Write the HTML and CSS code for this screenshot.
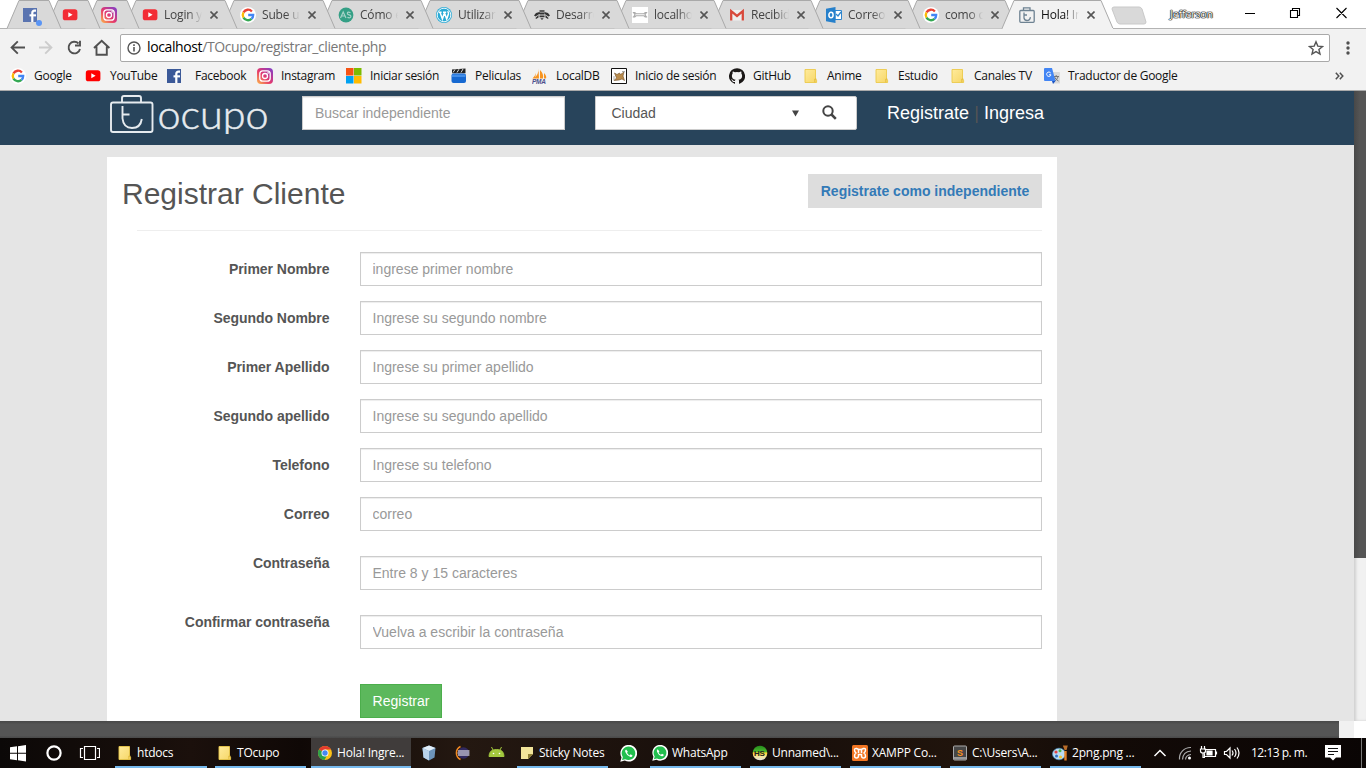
FILE: index.html
```html
<!DOCTYPE html>
<html lang="es">
<head>
<meta charset="utf-8">
<title>Hola! Ingresa</title>
<link rel="stylesheet" href="styles.css">
</head>
<body>
<svg class="defs" width="0" height="0">
  <defs>
    <linearGradient id="ig" x1="0" y1="1" x2="1" y2="0"><stop offset="0" stop-color="#fdb94b"/><stop offset=".45" stop-color="#e5386d"/><stop offset="1" stop-color="#7a3fd0"/></linearGradient>
    <linearGradient id="hs" x1="0" y1="0" x2="0" y2="1"><stop offset="0" stop-color="#238a1c"/><stop offset=".4" stop-color="#4bb82e"/><stop offset=".5" stop-color="#ffd42a"/><stop offset=".75" stop-color="#f6e6a0"/><stop offset="1" stop-color="#ddd"/></linearGradient>
    <linearGradient id="fold" x1="0" y1="0" x2="1" y2="1"><stop offset="0" stop-color="#ffeb9c"/><stop offset="1" stop-color="#f6d666"/></linearGradient>
  </defs>
  <symbol id="google" viewBox="0 0 16 16"><circle cx="8" cy="8" r="8" fill="#fff"/><g fill="none" stroke-width="2.300"><path d="M11.900 4.400A5.200 5.200 0 0 0 3.500 5.400" stroke="#ea4335"/><path d="M3.500 5.400a5.200 5.200 0 0 0 0 5.200" stroke="#fbbc05"/><path d="M3.500 10.600a5.200 5.200 0 0 0 8 1.300" stroke="#34a853"/><path d="M11.500 11.900A5.200 5.200 0 0 0 13.200 8H8.200" stroke="#4285f4"/></g></symbol>
  <symbol id="youtube" viewBox="0 0 16 16"><rect x=".8" y="2.300" width="14.600" height="11" rx="2.600" fill="currentColor"/><path d="M6.300 5.300v5L10.600 7.800z" fill="#fff"/></symbol>
  <symbol id="facebook" viewBox="0 0 16 16"><path fill="currentColor" d="M1 1h14v14H1z"/><path d="M10.300 15V6q0-2.400 2.300-2.400H14" fill="none" stroke="#fff" stroke-width="2.200"/><path d="M7.500 7.300H14v2.100H7.500z" fill="#fff"/></symbol>
  <symbol id="instagram" viewBox="0 0 16 16"><rect width="16" height="16" rx="4" fill="url(#ig)"/><rect x="2.800" y="2.800" width="10.400" height="10.400" rx="3" fill="none" stroke="#fff" stroke-width="1.300"/><circle cx="8" cy="8" r="2.500" fill="none" stroke="#fff" stroke-width="1.300"/><circle cx="11.100" cy="4.900" r=".8" fill="#fff"/></symbol>
  <symbol id="androidstudio" viewBox="0 0 16 16"><circle cx="8" cy="8" r="7.400" fill="#349f85"/><path d="M2.500 11 5.200 5 8 11M3.600 9h3.300M12.500 5.800q-3-1.500-3.200.5 0 1.300 1.800 1.500 2 .4 1.800 1.800-.4 1.900-3.500.8" fill="none" stroke="#a5d2c7" stroke-width="1.200"/></symbol>
  <symbol id="wordpress" viewBox="0 0 16 16"><circle cx="8" cy="8" r="8" fill="#2aaad5"/><circle cx="8" cy="8" r="6.800" fill="none" stroke="#fff" stroke-width=".9"/><path d="M2.600 5.200h3M4 5.300 6.400 12l1.800-5.600M7 5.200h3.200M8.300 5.300l2.400 6.700 1.700-5q.4-1.600-.8-2.800" fill="none" stroke="#fff" stroke-width="1.500"/></symbol>
  <symbol id="bee" viewBox="0 0 16 16"><g fill="#333"><path d="M0 8.500 2 6l3.500-1 .5 1.500L1.500 9.500zM16 8.500 14 6l-3.500-1-.5 1.500 4.500 3zM5.500 3.300h5v1.400h-5zM5.500 5.500h5v2h-5zM5.500 8.500h5v1.800h-5zM6.300 11.200h3.400L8 13zM1.500 11l3-3v2.500L2 12zM14.500 11l-3-3v2.500L14 12z"/></g></symbol>
  <symbol id="local" viewBox="0 0 16 16"><path fill="#fff" d="M0 0h16v16H0z"/><path d="M.8 5.500h2L4 6.700h8l1.200-1.200h2M.8 10h2L4 8.800h8l1.200 1.200h2M1.500 5.500 3 7.700 1.500 10M14.500 5.500 13 7.700l1.500 2.300" fill="none" stroke="#aaa" stroke-width="1.100"/></symbol>
  <symbol id="gmail" viewBox="0 0 16 16"><path d="M1 3h14v10.500H1z" fill="#eee"/><path d="M2.200 13.500V4.200L8 9l5.800-4.800v9.300" fill="none" stroke="#d8493b" stroke-width="2.300"/></symbol>
  <symbol id="outlook" viewBox="0 0 16 16"><path d="M9 3.500h6.500v9H9z" fill="#fff" stroke="#2f86ce"/><path d="m10 7 2 2 3-4" fill="none" stroke="#2f86ce" stroke-width="1.300"/><path d="M0 1.800 9.500 0v16L0 14.200z" fill="#2680cb"/><ellipse cx="5" cy="8" rx="2.100" ry="2.700" fill="none" stroke="#fff" stroke-width="1.500"/></symbol>
  <symbol id="case" viewBox="0 0 16 16"><g fill="none" stroke="#6e8292" stroke-width="1.300"><rect x=".8" y="3.500" width="14.400" height="11.800" rx="1"/><path d="M4.500 3.500V.8H11v2.700M5 5.500V11q.5 2.500 3 2.500 3 0 3.400-3.400M5 8h3"/></g></symbol>
  <symbol id="folder" viewBox="0 0 16 16"><path d="M2 1.500h10.500v10H13q.6 0 .6.700v2.300H2z" fill="url(#fold)" stroke="#ecc94b" stroke-width=".9"/><path d="M11.800 14.300V11h1.600" fill="none" stroke="#dfb636" stroke-width=".8"/></symbol>
  <symbol id="whatsapp" viewBox="0 0 16 16"><path d="M.3 15.800 1.400 11.700A7.900 7.900 0 1 1 4.500 14.700z" fill="#fff"/><path d="m1.900 14.200.8-2.800A6.400 6.400 0 1 1 4.900 13.400z" fill="#22bf4e"/><path d="M5.700 4.300q-1.300.7-.7 2.400 1.200 3.400 4.800 4.600 1.700.2 2-1.500l-1.800-1-1 1q-1.700-.8-2.400-2.400l.8-1z" fill="#fff"/></symbol>
</svg>

<header class="browser">
  <div class="strip">
    <div class="tabs" id="tabs"></div>
    <div class="window">
      <svg class="newtab" viewBox="0 0 36 20"><path d="M3 1h25q2 0 3 2l4 13q0 2-2 2H9q-2 0-3-2L1 3q0-2 2-2z" fill="#d9d9d9" stroke="#c9c9c9"/></svg>
      <span class="user">Jefferson</span>
      <svg class="controls" viewBox="0 0 104 14"><path d="M0 7.500h10M45.500 4.500h7v7h-7zM47.500 4.500v-2h7v7h-2M91.500 2l10 10M101.500 2l-10 10" fill="none" stroke="#000" stroke-width="1.100"/></svg>
    </div>
  </div>
  <div class="toolbar">
    <svg class="nav" viewBox="0 0 104 20"><g fill="none" stroke="#505050" stroke-width="1.900"><path d="M16 9.500H3M8.800 3.300 2.600 9.500l6.200 6.200"/><path d="M30 9.500h12M36.200 3.300l6.200 6.200-6.200 6.200" stroke="#ccc"/><path d="M69.500 5.500A5.800 5.800 0 1 0 71 11M71 2.800V7.500h-5"/><path d="M85 10 92.700 2.800l7.700 7.200M87.500 8.500v8.200h10.300V8.500"/></g></svg>
    <div class="omnibox">
      <svg class="info" viewBox="0 0 14 14"><circle cx="7" cy="7" r="6" fill="none" stroke="#555" stroke-width="1.400"/><path d="M7 3.200v1.700M7 6v4.600" stroke="#555" stroke-width="1.600"/></svg>
      <span class="url"><b>localhost</b>/TOcupo/registrar_cliente.php</span>
      <svg class="star" viewBox="0 0 16 16"><path d="m8 1.800 1.800 4.300 4.700.4-3.600 3 1.100 4.600L8 11.600l-4 2.500 1.100-4.600-3.600-3 4.700-.4z" fill="none" stroke="#555" stroke-width="1.400"/></svg>
    </div>
    <svg class="dots" viewBox="0 0 4 14"><g fill="#505050"><circle cx="2" cy="2" r="1.700"/><circle cx="2" cy="7" r="1.700"/><circle cx="2" cy="12" r="1.700"/></g></svg>
  </div>
  <nav class="bookmarks">
    <a><svg class="ico"><use href="#google"/></svg>Google</a>
    <a class="tube"><svg class="ico yt"><use href="#youtube"/></svg>YouTube</a>
    <a class="wide"><svg class="ico fb"><use href="#facebook"/></svg>Facebook</a>
    <a><svg class="ico"><use href="#instagram"/></svg>Instagram</a>
    <a><svg class="ico" viewBox="0 0 16 16"><path fill="#f65314" d="M0 0h7.500v7.500H0z"/><path fill="#7cbb00" d="M8 0h7.500v7.500H8z"/><path fill="#00a1f1" d="M0 8h7.500v7.500H0z"/><path fill="#ffbb00" d="M8 8h7.500v7.500H8z"/></svg>Iniciar sesión</a>
    <a><svg class="ico" viewBox="0 0 16 16"><path d="M1 1.500 14.500.5v4.800H1z" fill="#222"/><path d="m4 1.500-2 3M8 1.200 6 4.500M12 1l-2 3.500" stroke="#ddd"/><rect x=".5" y="5.500" width="14.500" height="9.500" rx="2" fill="#1769d1"/><path d="M1 6.500h13.500V9H1z" fill="#438ee8"/></svg>Peliculas</a>
    <a><svg class="ico" viewBox="0 0 16 16"><path d="M6.500.5Q7 6 2 10.500h5zM8 2q4 4 3 8.500H8zM12 5q3 3 2 5.500h-2zM4 5Q3 8 .5 10.500H3z" fill="#f79420"/><text x="0" y="15.500" class="pma">PMA</text></svg>LocalDB</a>
    <a><svg class="ico" viewBox="0 0 16 16"><path d="M.5.500h15v15H.5z" fill="#fff" stroke="#111"/><path d="M3 12.500 5.500 10 3.500 5 6 6.500 8.500 5l1 1.500L13 4l-1 4 1.500 4.500L11 11l-3 1z" fill="#b98b4b" stroke="#71502d" stroke-width=".6"/><path d="M2 9h2M2 11h2M11 3.500h3" stroke="#888" stroke-width=".7"/></svg>Inicio de sesión</a>
    <a><svg class="ico" viewBox="0 0 16 16"><path d="M8 .2a8 8 0 0 0-2.500 15.600c.4 0 .5-.2.500-.4v-1.500c-2.200.5-2.700-1-2.700-1-.4-.9-.9-1.200-.9-1.200-.7-.5.100-.5.100-.5.800.1 1.200.8 1.200.8.700 1.300 1.900.9 2.300.7.100-.5.300-.9.500-1.100-1.800-.2-3.600-.9-3.600-3.900 0-.9.300-1.600.8-2.200-.1-.2-.3-1 .1-2.100 0 0 .7-.2 2.200.8a7.600 7.600 0 0 1 4 0c1.500-1 2.200-.8 2.200-.8.400 1.100.2 1.900.1 2.100.5.600.8 1.300.8 2.200 0 3.100-1.900 3.700-3.600 3.900.3.300.5.800.5 1.500v2.300c0 .2.200.5.600.4A8 8 0 0 0 8 .2z" fill="#1b1817"/></svg>GitHub</a>
    <a><svg class="ico"><use href="#folder"/></svg>Anime</a>
    <a><svg class="ico"><use href="#folder"/></svg>Estudio</a>
    <a><svg class="ico"><use href="#folder"/></svg>Canales TV</a>
    <a><svg class="ico" viewBox="0 0 16 16"><path d="M6 4h9q1 0 1 1v10.500H9z" fill="#d9d9d9"/><path d="M9.500 8.500H15M12.200 7v1.500M14 9q-1 3-4 4.500M10.500 9q1 2.500 4 4" fill="none" stroke="#777"/><path d="M1 0h7l3.500 13H1q-1 0-1-1V1q0-1 1-1z" fill="#4285f4"/><path d="m8 13h3.500L9 16z" fill="#1a53c4"/><path d="M6.700 5A2.200 2.200 0 1 0 7 6.800H5" fill="none" stroke="#fff"/></svg>Traductor de Google</a>
    <svg class="more" viewBox="0 0 9 8"><path d="m.8.800 3 3.200-3 3.200M4.800.800l3 3.200-3 3.200" fill="none" stroke="#505050" stroke-width="1.500"/></svg>
  </nav>
</header>

<div class="viewport">
  <div class="page">
    <div class="topbar">
      <svg class="logo" viewBox="0 0 162 40"><g fill="none" stroke="#e6ebef" stroke-width="1.900"><rect x="3" y="8.500" width="41.500" height="29.500" rx="2"/><path d="M14 8.500V4q0-2 2-2h15q2 0 2 2v4.500M14.500 12v12.500q1 9.500 9.500 9.500 8.500 0 9.800-9M14.500 20.500h7"/></g><text x="49.500" y="35" textLength="111" lengthAdjust="spacingAndGlyphs">ocupo</text></svg>
      <input class="field search" placeholder="Buscar independiente">
      <div class="city"><span>Ciudad</span><svg class="arrow" viewBox="0 0 7 7"><path d="M0 .5h7L3.500 6.500z" fill="#444"/></svg><svg class="lens" viewBox="0 0 15 15"><circle cx="6" cy="6" r="4.700" fill="none" stroke="#444" stroke-width="2"/><path d="m9.500 9.500 4.300 4.300" stroke="#444" stroke-width="2.500"/></svg></div>
      <div class="account"><a>Registrate</a><span>|</span><a>Ingresa</a></div>
    </div>
    <main class="card">
      <div class="heading"><h2>Registrar Cliente</h2><a class="alt">Registrate como independiente</a></div>
      <hr>
      <form>
        <div class="row"><label>Primer Nombre</label><input class="field" placeholder="ingrese primer nombre"></div>
        <div class="row"><label>Segundo Nombre</label><input class="field" placeholder="Ingrese su segundo nombre"></div>
        <div class="row"><label>Primer Apellido</label><input class="field" placeholder="Ingrese su primer apellido"></div>
        <div class="row"><label>Segundo apellido</label><input class="field" placeholder="Ingrese su segundo apellido"></div>
        <div class="row"><label>Telefono</label><input class="field" placeholder="Ingrese su telefono"></div>
        <div class="row"><label>Correo</label><input class="field" placeholder="correo"></div>
        <div class="row low"><label>Contraseña</label><input class="field" placeholder="Entre 8 y 15 caracteres"></div>
        <div class="row low"><label>Confirmar contraseña</label><input class="field" placeholder="Vuelva a escribir la contraseña"></div>
        <button type="button" class="submit">Registrar</button>
      </form>
    </main>
  </div>
  <div class="vscroll"><div class="vthumb"></div></div>
</div>
<div class="hscroll"><div class="hthumb"></div><div class="htrack"></div></div>

<footer class="taskbar">
  <svg class="start" viewBox="0 0 100 20"><path d="m10 4.300 7-1v6.500h-7zM18 3.200 26 2v7.800h-8zM10 10.700h7v6.500l-7-1zM18 10.700h8v7.800l-8-1.200z" fill="#fff"/><circle cx="54" cy="10" r="6.600" fill="none" stroke="#fff" stroke-width="2.200"/><path d="M84.500 3.500h11v13h-11zM83 5.500h-2.500v9H83M97 5.500h2.500v9H97" fill="none" stroke="#fff" stroke-width="1.200"/></svg>
  <a class="task"><svg class="ico"><use href="#folder"/></svg>htdocs</a>
  <a class="task"><svg class="ico"><use href="#folder"/></svg>TOcupo</a>
  <a class="task active"><svg class="ico" viewBox="0 0 16 16"><circle cx="8" cy="8" r="7" fill="#fbc116"/><path d="M8 8 1.900 4.600A7 7 0 0 1 14.100 4.600H8z" fill="#e33b2e"/><path d="M8 8 1.900 4.600A7 7 0 0 0 7.500 15L10.500 9.500z" fill="#2ca14b"/><circle cx="8" cy="8" r="3.500" fill="#fff"/><circle cx="8" cy="8" r="2.700" fill="#4688f1"/></svg>Hola! Ingre...</a>
  <svg class="pinned" viewBox="0 0 84 18"><path d="m8 1.500 6.500 2.500-1 9.500L8 16.500l-5.500-3L1.500 4z" fill="#6c93ba"/><path d="m8 1.500 6.500 2.500L8 7 1.500 4z" fill="#e2effa"/><path d="M8 7 1.500 4l1 9.500 5.500 3z" fill="#b9d3ec"/><circle cx="42.500" cy="9" r="5.800" fill="#31295f"/><path d="M37 7h11.500M36.500 9h12M37 11h11.500" stroke="#fff" stroke-width="1.100"/><path d="M39.500 2.500A7.200 7.200 0 0 0 39.500 15.500" fill="none" stroke="#f28a23" stroke-width="1.500"/><path d="M68 12.500q0-7 7.500-7t7.500 7zM70.500 3 72 6M80.500 3 79 6" fill="#a3c83e" stroke="#a3c83e"/><circle cx="72.500" cy="9.500" r=".8" fill="#fff"/><circle cx="78.500" cy="9.500" r=".8" fill="#fff"/></svg>
  <a class="task"><svg class="ico" viewBox="0 0 16 16"><path d="M2 2h12v7l-5 5H2z" fill="#f2e49a"/><path d="M9 14V9h5z" fill="#8d7d34"/></svg>Sticky Notes</a>
  <svg class="ico wa"><use href="#whatsapp"/></svg>
  <a class="task near"><svg class="ico"><use href="#whatsapp"/></svg>WhatsApp</a>
  <a class="task near"><svg class="ico" viewBox="0 0 16 16"><circle cx="8" cy="8" r="7.300" fill="url(#hs)"/><text x="2" y="11" class="hs">HS</text></svg>Unnamed\...</a>
  <a class="task near"><svg class="ico" viewBox="0 0 16 16"><rect width="16" height="16" rx="1.500" fill="#f37623"/><path d="M4.500 3.500Q8 5.500 11.500 3.500q2-.5 2 1.500 0 1.800-1.500 3 1.500 1 1.500 3 0 2-2 2-1.800 0-2-2V9.500h-3V11q-.2 2-2 2t-2-2q0-2 1.500-3-1.500-1.200-1.500-3t2-1.500zM6.500 5v3M9.500 5v3" fill="none" stroke="#fff" stroke-width="1.500"/></svg>XAMPP Co...</a>
  <a class="task near"><svg class="ico" viewBox="0 0 16 16"><rect x="1.500" y="1" width="13" height="14" rx="1" fill="#474747" stroke="#aaa"/><path d="M2 12h12v2.500H2z" fill="#999"/><text x="5" y="10.500" class="subl">S</text></svg>C:\Users\A...</a>
  <a class="task near"><svg class="ico" viewBox="0 0 16 16"><ellipse cx="7" cy="9" rx="6.500" ry="5.800" fill="#b9dcf3" stroke="#4b95c9" stroke-width=".6"/><circle cx="4" cy="7" r="1.600" fill="#e04444"/><circle cx="8" cy="5.800" r="1.500" fill="#4fb443"/><circle cx="4.500" cy="11" r="1.500" fill="#3171c7"/><circle cx="8.500" cy="12" r="1.500" fill="#f2c530"/><path d="M13.500 6v9.500" stroke="#e28227" stroke-width="2.400"/><path d="M10.800.500h5L14.600 5h-2z" fill="#b86d29"/></svg>2png.png ...</a>
  <svg class="tray" viewBox="0 0 90 20"><g fill="none" stroke="#fff" stroke-width="1.200"><path d="m4.500 13 5.500-5.500 5.500 5.500" stroke-width="1.500"/><path d="M29.500 16.500A11 11 0 0 1 41 4.500M32.500 16.500q.5-8 8.500-8.500M35.500 16.500Q36 12 41 11.500" stroke="#aaa"/><path d="M54.500 6.500h11v7h-11v-3M66.500 8.500v3M51.500 3v3M54.500 3v3M50.500 6h5v2q0 2-2.500 2T50.500 8zM53 10v4.500h2"/><path d="M57 8h5v4h-5z" fill="#fff"/><path d="M74.500 8.500h2l3.500-3.500v10l-3.500-3.500h-2zM82 7.500q2 2.500 0 5M84.500 6q3 4 0 8M87 4.500q4 5.500 0 11"/></g><circle cx="39.500" cy="15" r="1.500" fill="#fff"/></svg>
  <span class="clock">12:13 p. m.</span>
  <svg class="note" viewBox="0 0 16 16"><path d="M0 0h16v12.500h-5L8 15.500l-3-3H0z" fill="#fff"/><path d="M3 3.500h10M3 6.500h10M3 9.500h6" stroke="#111"/></svg>
  <span class="edge"></span>
</footer>
<script src="tabs.js"></script>
</body>
</html>
```
FILE: styles.css
```css
* { box-sizing: border-box; }
body { margin: 0; width: 1366px; height: 768px; overflow: hidden; font-family: "Liberation Sans", Arial, sans-serif; font-size: 14px; line-height: 20px; color: #555; background: #fff; }
.defs { position: absolute; }
.ico { width: 16px; height: 16px; flex: none; }
.pma { font: italic bold 6.500px "Liberation Sans", sans-serif; fill: #4b4f8c; }
.hs { font: bold 8px "Liberation Sans", sans-serif; fill: #222; }
.subl { font: bold 9px "Liberation Sans", sans-serif; fill: #ff9421; }

.browser { height: 91px; background: #f2f2f2; border-bottom: 1px solid #aaa; font-family: "Open Sans", "Noto Sans", sans-serif; font-size: 12px; }
.strip { height: 29px; display: flex; background: #fff; border-bottom: 1px solid #b3b3b3; }
.tabs { display: flex; padding-left: 18px; width: 1111px; flex: none; }
.tab { position: relative; isolation: isolate; flex: none; height: 29px; display: flex; align-items: center; padding: 1px 0 0 7px; color: #444; letter-spacing: -.2px; }
.tab .shape { position: absolute; left: -11px; top: 0; height: 29px; overflow: visible; z-index: -1; }
.tab .ico { margin-right: 6px; }
.tab.pin { padding-left: 5px; }
.tab.pin:first-child .ico { margin-left: -1px; }
.tab .label { width: 40px; overflow: hidden; white-space: nowrap; -webkit-mask-image: linear-gradient(90deg, #000 60%, transparent 95%); mask-image: linear-gradient(90deg, #000 60%, transparent 95%); }
.tab.on { color: #111; padding-left: 6px; }
.tab .close { width: 8px; height: 8px; margin-left: 6px; }
.tab .dot { position: absolute; left: 18px; top: 20px; width: 6px; height: 6px; border-radius: 50%; background: #5a95f5; }
.yt { color: #f00; }
.fb { color: #3b5998; }
.window { flex: 1; display: flex; align-items: center; }
.newtab { width: 36px; height: 20px; margin: 3px 23px 0 0; }
.user { width: 75px; font-size: 10.500px; letter-spacing: -.1px; line-height: 20px; color: #fff; text-shadow: 0 0 1px #000, 0 0 1px #000, 0 0 1px #000, 0 0 1px #000; }
.controls { width: 104px; height: 14px; margin-top: -2px; }
.toolbar { height: 34px; display: flex; align-items: center; padding: 3px 16px 0 9px; }
.nav { width: 104px; height: 20px; margin-right: 7px; }
.omnibox { width: 1210px; height: 28px; display: flex; align-items: center; border: 1px solid #a9a9a9; border-radius: 2px; background: #fff; padding: 0 5px 0 6px; }
.info { width: 14px; height: 14px; margin-right: 6px; }
.url { font-size: 14px; line-height: 20px; margin-top: -1px; color: #777; letter-spacing: -.39px; flex: 1; }
.url b { font-weight: 400; color: #000; }
.star { width: 16px; height: 16px; }
.dots { width: 4px; height: 14px; margin-left: 16px; }
.bookmarks { height: 26px; padding-left: 10px; display: grid; align-items: center; grid-template-columns: 76px 81px 90px 89px 105px 81px 79px 118px 74px 71px 76px 94px 291px 9px; color: #111; letter-spacing: -.28px; }
.bookmarks a { display: flex; align-items: center; gap: 8px; white-space: nowrap; }
.bookmarks .wide { gap: 12px; }
.bookmarks .wide .ico, .bookmarks .tube .ico { margin-left: -1px; margin-right: 1px; }
.more { width: 9px; height: 8px; }

.viewport { height: 630px; display: flex; }
.page { width: 1354px; height: 630px; overflow: hidden; background: #e5e5e5; }
.topbar { height: 54px; display: flex; align-items: flex-start; background: #28445b; padding: 5px 0 0 108px; }
.logo { width: 162px; height: 40px; margin: -2px 32px 0 0; overflow: hidden; }
.logo text { font: 300 38.500px Lato, sans-serif; fill: #e6ebef; stroke: #e6ebef; stroke-width: .5px; }
.field { display: block; height: 34px; width: 682px; border: 1px solid #ccc; border-radius: 0; background: #fff; padding: 6px 12px 6px 11.500px; font: 14px/20px "Liberation Sans", Arial, sans-serif; color: #555; box-shadow: inset 0 1px 1px rgba(0,0,0,.075); }
.field::placeholder { color: #999; opacity: 1; }
.search { width: 263px; margin-right: 30px; padding-left: 12px; }
.city { width: 262px; height: 34px; display: flex; align-items: center; background: #fff; border: 1px solid #ccc; border-radius: 0 2px 2px 0; padding-left: 15.500px; }
.city span { width: 180px; }
.arrow { width: 7px; height: 7px; margin-right: 23px; }
.lens { width: 15px; height: 15px; margin-top: -2px; }
.account { display: flex; margin-left: 30px; padding-top: 7px; font-size: 18px; color: #fff; }
.account span { color: #555; width: 15px; text-align: center; font-size: 18px; }
.card { width: 950px; height: 564px; margin: 12px 0 0 107px; background: #fff; padding: 17px 15px 0; }
.heading { display: flex; justify-content: space-between; height: 56px; }
h2 { margin: 3px 0 0; font-size: 30px; line-height: 33px; font-weight: 400; color: #555; }
.alt { width: 234px; height: 34px; background: #ddd; color: #337ab7; font-weight: 700; line-height: 34px; text-align: center; }
hr { margin: 0 0 21px 15px; border: 0; border-top: 1px solid #eee; }
.row { display: grid; grid-template-columns: 207.500px 682px; column-gap: 30.500px; margin-bottom: 15px; }
.row label { font-weight: 700; text-align: right; padding-top: 7px; height: 34px; letter-spacing: -.04px; }
.row.low .field { margin-top: 10px; }
.submit { display: block; width: 82px; height: 34px; margin: 35px 0 0 238px; padding: 0; background: #5cb85c; border: 1px solid #4cae4c; color: #fff; font: 14px/20px "Liberation Sans", Arial, sans-serif; }
.vscroll { width: 12px; background: #f1f1f1; box-shadow: inset 2px 0 3px #d0d0d0; }
.vthumb { height: 467px; background: linear-gradient(90deg, #484848, #555 50%); }
.hscroll { height: 17px; display: flex; background: #fff; }
.hthumb { width: 1339px; background: linear-gradient(#484848, #555 20%, #555 85%, #484848); }
.htrack { width: 15px; background: #f1f1f1; }

.taskbar { height: 30px; display: grid; align-items: center; grid-template-columns: 115px 92px 8px 91px 5px 100px 10px 84px 12px 91px 12px 30px 91px 9px 91px 9px 91px 9px 91px 9px 91px 9px 90px 11px 74px 36px 1px; background: linear-gradient(90deg, #0b0807, #1b100c 14%, #0f0806 22%, #241811 34%, #160d0a 55%, #20140c 70%, #120a07 82%, #0a0504); color: #fff; font: 12px/20px "Open Sans", "Noto Sans", sans-serif; }
.start { grid-column: 1; width: 100px; height: 20px; }
.task { height: 30px; display: flex; align-items: center; gap: 4px; padding: 2px 0 0 2px; border-bottom: 2px solid #76b9ed; white-space: nowrap; letter-spacing: -.22px; }
.task:nth-of-type(1) { grid-column: 2; }
.task:nth-of-type(2) { grid-column: 4; }
.task:nth-of-type(3) { grid-column: 6; padding-left: 6px; }
.active { background: #403c3b; }
.pinned { grid-column: 8; width: 84px; height: 18px; }
.task:nth-of-type(4) { grid-column: 10; }
.wa { grid-column: 12; width: 17px; height: 17px; }
.task:nth-of-type(5) { grid-column: 13; }
.task:nth-of-type(6) { grid-column: 15; }
.task:nth-of-type(7) { grid-column: 17; }
.task:nth-of-type(8) { grid-column: 19; }
.task:nth-of-type(9) { grid-column: 21; }
.tray { grid-column: 23; width: 90px; height: 20px; }
.clock { grid-column: 25; letter-spacing: -.5px; }
.note { grid-column: 26; width: 16px; height: 16px; }
.edge { grid-column: 27; height: 30px; background: #777; }
```
FILE: tabs.js
```js
// Tab strip: icon, label, slot width
const tabs = [
  ["facebook", "", 39], ["youtube", "", 39], ["instagram", "", 39],
  ["youtube", "Login y", 98], ["google", "Sube un", 98], ["androidstudio", "Cómo e", 98],
  ["wordpress", "Utilizar", 98], ["bee", "Desarro", 98], ["local", "localho", 97],
  ["gmail", "Recibid", 97], ["outlook", "Correo", 97], ["google", "como c", 97],
  ["case", "Hola! In", 98]
];
const colors = { facebook: "#5a74b0", youtube: "#f22c35" };
document.getElementById("tabs").innerHTML = tabs.map(([icon, label, w], i) => {
  const on = i === tabs.length - 1;
  const r = w + (on ? 1 : 3);
  const d = `M0 28.500 12 .5H${r}L${r + 12} 28.500`;
  return `<div class="tab${label ? "" : " pin"}${on ? " on" : ""}" style="width:${w}px;z-index:${on ? 30 : 20 - i}">
    <svg class="shape" width="${w + 24}"><path d="${d}" fill="${on ? "#f2f2f2" : "#d9d9d9"}" stroke="#a9a9a9"/>${on ? `<path d="M1 28.500H${r + 12}" stroke="#f2f2f2"/>` : ""}</svg>
    <svg class="ico" style="color:${colors[icon] || "#000"}"><use href="#${icon}"/></svg>${
    label ? `<span class="label">${label}</span><svg class="close" viewBox="0 0 8 8"><path d="M.5.500l7 7M7.500.500l-7 7" stroke="#555" stroke-width="1.600"/></svg>` : ""}${
    i === 0 ? '<i class="dot"></i>' : ""}</div>`;
}).join("");
```
